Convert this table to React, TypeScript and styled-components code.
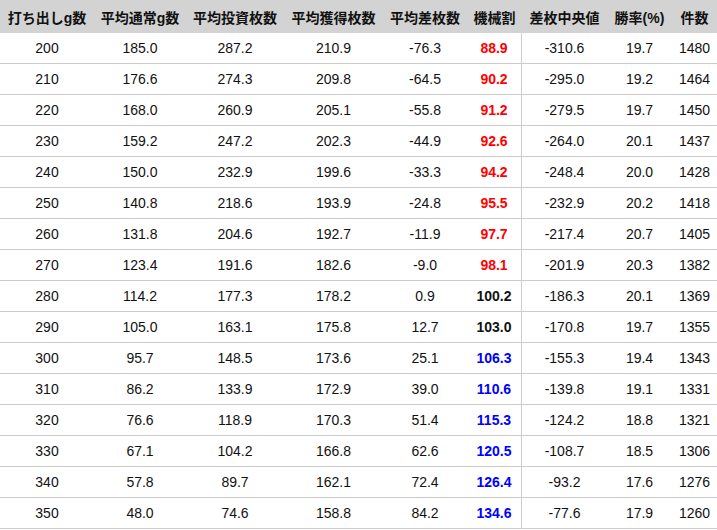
import React from "react";
import styled, { createGlobalStyle } from "styled-components";

const Global = createGlobalStyle`
  html, body { margin: 0; padding: 0; background: #ffffff; }
  body { font-family: "Liberation Sans", "Noto Sans CJK JP", Arial, sans-serif; }
`;

const Table = styled.table`
  width: 717px;
  table-layout: fixed;
  border-collapse: separate;
  border-spacing: 0;
  font-family: "Liberation Sans", "Noto Sans CJK JP", Arial, sans-serif;
  font-size: 14px;
  color: #111;
`;

const HeadCell = styled.th`
  height: 33px;
  padding: 0;
  background: #d3d3d3;
  font-weight: bold;
  text-align: center;
  white-space: nowrap;
  vertical-align: middle;
`;

const Cell = styled.td<{ $divider?: boolean; $tone?: "red" | "blue" | "black" }>`
  height: 30px;
  padding: 0;
  text-align: center;
  vertical-align: middle;
  white-space: nowrap;
  border-bottom: 1px solid #cccccc;
  border-right: ${(p) => (p.$divider ? "1px solid #cccccc" : "none")};
  font-weight: ${(p) => (p.$tone ? "bold" : "normal")};
  color: ${(p) =>
    p.$tone === "red" ? "#ff0000" : p.$tone === "blue" ? "#0000ff" : "#111"};
`;

const widths = [94, 92, 98, 99, 84, 55, 85, 65, 45];
const headers = [
  "打ち出しg数",
  "平均通常g数",
  "平均投資枚数",
  "平均獲得枚数",
  "平均差枚数",
  "機械割",
  "差枚中央値",
  "勝率(%)",
  "件数",
];

const rows: string[][] = [
  ["200", "185.0", "287.2", "210.9", "-76.3", "88.9", "-310.6", "19.7", "1480"],
  ["210", "176.6", "274.3", "209.8", "-64.5", "90.2", "-295.0", "19.2", "1464"],
  ["220", "168.0", "260.9", "205.1", "-55.8", "91.2", "-279.5", "19.7", "1450"],
  ["230", "159.2", "247.2", "202.3", "-44.9", "92.6", "-264.0", "20.1", "1437"],
  ["240", "150.0", "232.9", "199.6", "-33.3", "94.2", "-248.4", "20.0", "1428"],
  ["250", "140.8", "218.6", "193.9", "-24.8", "95.5", "-232.9", "20.2", "1418"],
  ["260", "131.8", "204.6", "192.7", "-11.9", "97.7", "-217.4", "20.7", "1405"],
  ["270", "123.4", "191.6", "182.6", "-9.0", "98.1", "-201.9", "20.3", "1382"],
  ["280", "114.2", "177.3", "178.2", "0.9", "100.2", "-186.3", "20.1", "1369"],
  ["290", "105.0", "163.1", "175.8", "12.7", "103.0", "-170.8", "19.7", "1355"],
  ["300", "95.7", "148.5", "173.6", "25.1", "106.3", "-155.3", "19.4", "1343"],
  ["310", "86.2", "133.9", "172.9", "39.0", "110.6", "-139.8", "19.1", "1331"],
  ["320", "76.6", "118.9", "170.3", "51.4", "115.3", "-124.2", "18.8", "1321"],
  ["330", "67.1", "104.2", "166.8", "62.6", "120.5", "-108.7", "18.5", "1306"],
  ["340", "57.8", "89.7", "162.1", "72.4", "126.4", "-93.2", "17.6", "1276"],
  ["350", "48.0", "74.6", "158.8", "84.2", "134.6", "-77.6", "17.9", "1260"],
];

function toneFor(v: string): "red" | "blue" | "black" {
  const n = parseFloat(v);
  if (n < 100) return "red";
  if (n < 105) return "black";
  return "blue";
}

export default function App() {
  return (
    <>
      <Global />
      <Table>
        <colgroup>
          {widths.map((w, i) => (
            <col key={i} style={{ width: w }} />
          ))}
        </colgroup>
        <thead>
          <tr>
            {headers.map((h) => (
              <HeadCell key={h}>{h}</HeadCell>
            ))}
          </tr>
        </thead>
        <tbody>
          {rows.map((r) => (
            <tr key={r[0]}>
              {r.map((v, i) => (
                <Cell
                  key={i}
                  $divider={i === 5}
                  $tone={i === 5 ? toneFor(v) : undefined}
                >
                  {v}
                </Cell>
              ))}
            </tr>
          ))}
        </tbody>
      </Table>
    </>
  );
}
